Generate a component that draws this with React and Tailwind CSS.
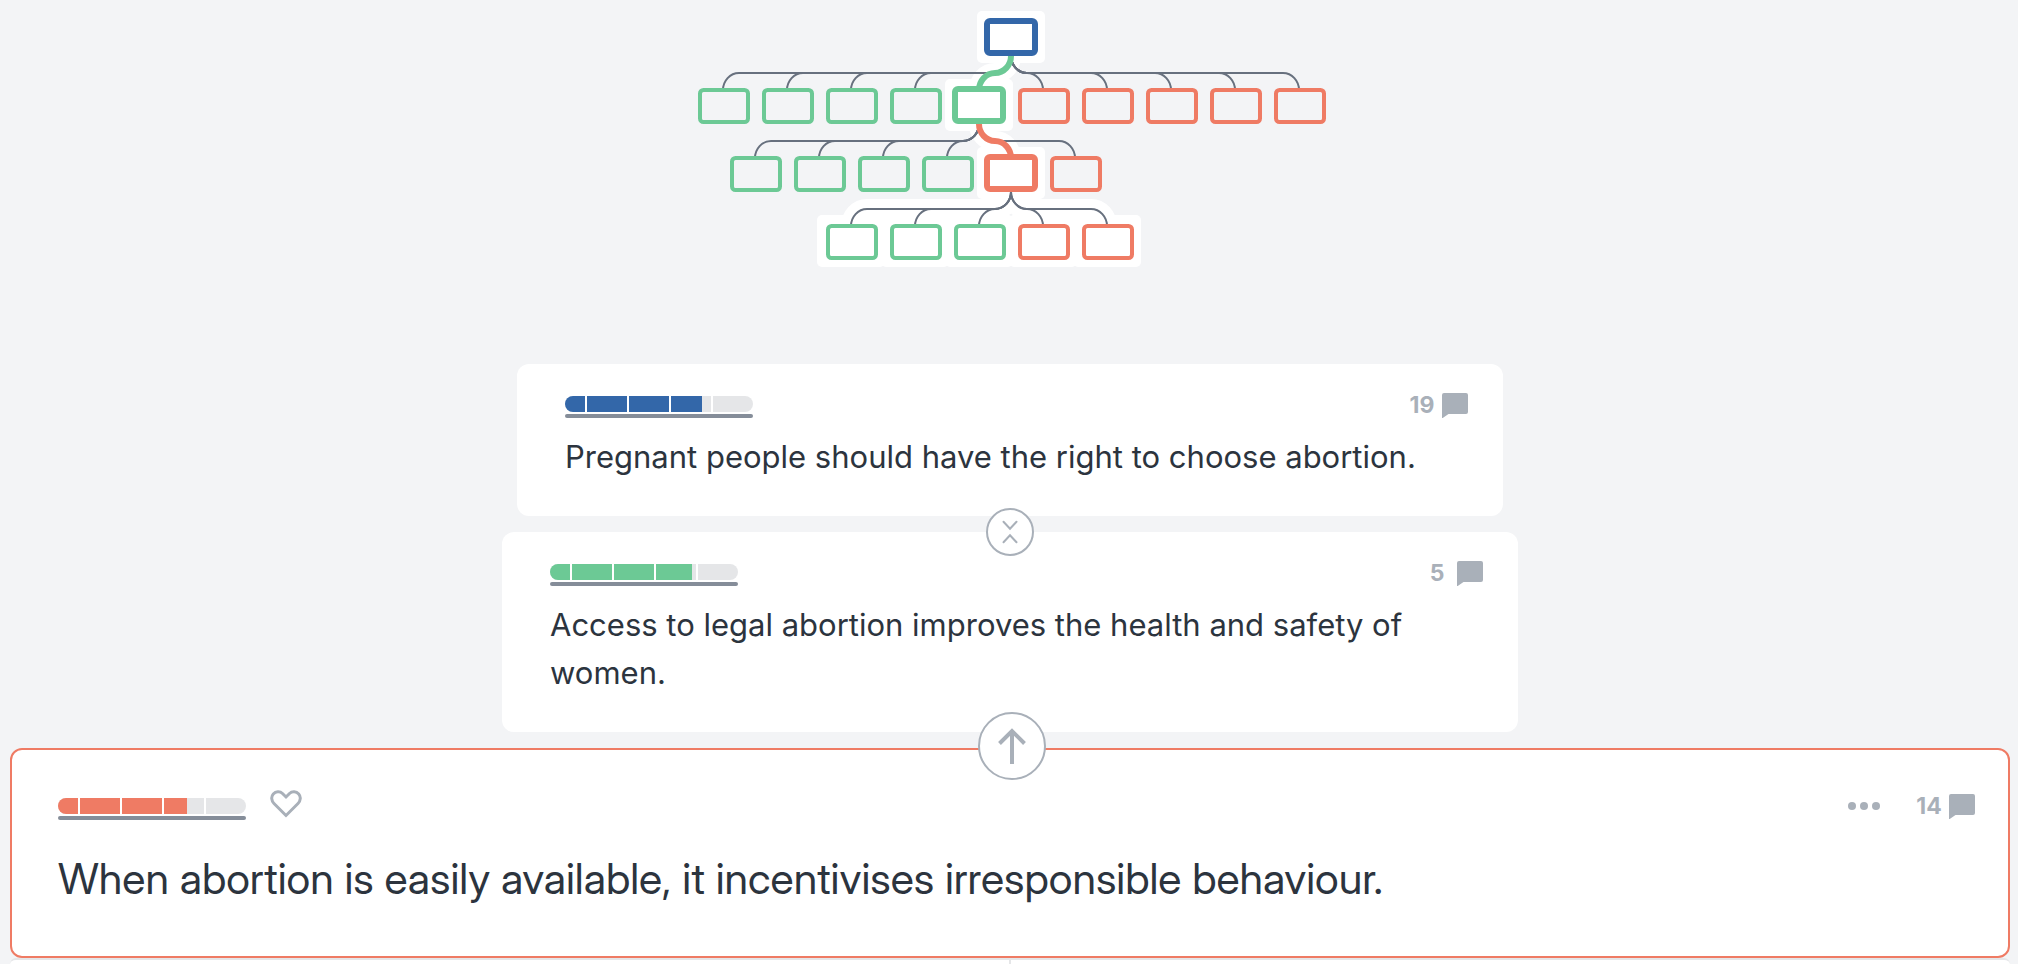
import React from "react";

const GREEN = "#6cc995";
const CORAL = "#ef7b64";
const BLUE = "#3367a9";

/* Rows of the argument map: x positions of the link ends, first child to last. */
const ROWS = [
  { parentX: 1011, top: 56, firstX: 723, pros: 5, count: 10, active: 4 },
  { parentX: 979, top: 124, firstX: 755, pros: 4, count: 6, active: 4 },
  { parentX: 1011, top: 192, firstX: 851, pros: 3, count: 5, active: -1, halo: true },
];

function linkPath(parentX, top, childX) {
  const dir = childX < parentX ? -1 : 1;
  const mid = top + 17;
  return [
    `M${parentX} ${top}`,
    `C${parentX} ${top + 9} ${parentX + dir * 7} ${mid} ${parentX + dir * 16} ${mid}`,
    `H${childX - dir * 16}`,
    `C${childX - dir * 7} ${mid} ${childX} ${mid + 8} ${childX} ${top + 34}`,
  ].join(" ");
}

function Halo({ x, y }) {
  return <rect x={x} y={y} width="68" height="52" rx="5" fill="#fff" />;
}

function MapNode({ x, y, color, active }) {
  return active ? (
    <rect x={x - 24} y={y - 35} width="48" height="32" rx="3" fill="#fff" stroke={color} strokeWidth="6" />
  ) : (
    <rect x={x - 23} y={y + 2} width="48" height="32" rx="3.5" fill="none" stroke={color} strokeWidth="4" />
  );
}

function ArgumentMap() {
  const links = [];
  const nodes = [];
  const halos = [];
  const activeLinks = [];
  ROWS.forEach((row, r) => {
    for (let i = 0; i < row.count; i++) {
      const x = row.firstX + i * 64;
      const color = i < row.pros ? GREEN : CORAL;
      const d = linkPath(row.parentX, row.top, x);
      const active = i === row.active;
      const key = `${r}-${i}`;
      if (active || row.halo) {
        halos.push(<path key={`p${key}`} d={d} fill="none" stroke="#fff" strokeWidth="20" />);
        halos.push(<Halo key={key} x={x - 34} y={row.top + 23} />);
      }
      if (active) {
        activeLinks.push(<path key={key} d={d} fill="none" stroke={color} strokeWidth="6" />);
        nodes.push(<MapNode key={key} x={x} y={row.top + 68} color={color} active />);
      } else {
        links.push(<path key={key} d={d} fill="none" stroke="#67707e" strokeWidth="2" />);
        nodes.push(<MapNode key={key} x={x} y={row.top + 32} color={color} />);
      }
    }
  });
  return (
    <svg className="h-[272px] w-[640px] max-w-full" viewBox="690 0 640 272" role="img" aria-label="Argument map">
      <Halo x={977} y={11} />
      {halos}
      {links}
      {activeLinks}
      <MapNode x={1011} y={56} color={BLUE} active />
      {nodes}
    </svg>
  );
}

function VoteBar({ value, fill }) {
  return (
    <div className="flex w-[188px] flex-col gap-0.5" role="img" aria-label={`Impact ${value} of 188`}>
      <div className="relative flex h-4 overflow-hidden rounded-full bg-[#e5e6e8]">
        <div className={`absolute inset-y-0 left-0 ${fill}`} style={{ width: value }} />
        <div className="relative ml-5 w-0.5 bg-white" />
        <div className="relative ml-10 w-0.5 bg-white" />
        <div className="relative ml-10 w-0.5 bg-white" />
        <div className="relative ml-10 w-0.5 bg-white" />
      </div>
      <div className="h-1 rounded-xs bg-[#858d99]" />
    </div>
  );
}

function CommentCount({ count }) {
  return (
    <button type="button" className="flex items-center gap-1.5 text-[#a9b0b9]" aria-label={`${count} comments`}>
      <span className="min-w-7 text-center text-[23px] leading-[26px] font-bold">{count}</span>
      <svg className="h-[26px] w-[26px]" viewBox="0 0 26 26" fill="currentColor" aria-hidden="true">
        <path d="M2 1H24A2 2 0 0 1 26 3V20A2 2 0 0 1 24 22H6.5L0 26.5V3A2 2 0 0 1 2 1Z" />
      </svg>
    </button>
  );
}

function ClaimCard({ width, value, fill, count, children }) {
  return (
    <article className={`max-w-full rounded-xl bg-white pt-7 pr-[35px] pb-[35px] pl-12 ${width}`}>
      <div className="flex h-[26px] items-center justify-between">
        <div className="self-end">
          <VoteBar value={value} fill={fill} />
        </div>
        <CommentCount count={count} />
      </div>
      <p className="mt-[15px] text-[31px] leading-[48px]">{children}</p>
    </article>
  );
}

export default function App() {
  return (
    <main className="flex min-h-screen flex-col bg-[#f3f4f6] pr-2 pl-2.5 font-['Inter','Liberation_Sans',sans-serif] text-[#2c343e]">
      <div className="flex justify-center">
        <ArgumentMap />
      </div>

      <div className="mt-[92px] flex flex-col items-center gap-4">
        <ClaimCard width="w-[986px]" value={137} fill="bg-[#3367a9]" count={19}>
          Pregnant people should have the right to choose abortion.
        </ClaimCard>
        <div className="relative max-w-full">
          <ClaimCard width="w-[1016px]" value={142} fill="bg-[#6cc995]" count={5}>
            Access to legal abortion improves the health and safety of women.
          </ClaimCard>
          <button
            type="button"
            aria-label="Collapse"
            className="absolute -top-6 left-1/2 -ml-6 flex h-12 w-12 items-center justify-center rounded-full border-2 border-[#a9b0b9] bg-white text-[#a9b0b9]"
          >
            <svg className="h-6 w-4" viewBox="0 0 16 24" fill="none" stroke="currentColor" strokeWidth="2" strokeLinecap="round" aria-hidden="true">
              <path d="M1.5 1.8 8 8.8 14.5 1.8M1.5 22.2 8 15.2 14.5 22.2" />
            </svg>
          </button>
        </div>
      </div>

      <article className="relative mt-4 rounded-xl border-2 border-[#ef7b64] bg-white pt-[42px] pr-[33px] pb-12 pl-[46px]">
        <button
          type="button"
          aria-label="Go to parent claim"
          className="absolute -top-[38px] left-1/2 -ml-8 flex h-[68px] w-[68px] items-center justify-center rounded-full border-2 border-[#a9b0b9] bg-white text-[#a9b0b9]"
        >
          <svg className="h-9 w-7" viewBox="0 0 28 36" fill="none" stroke="currentColor" strokeWidth="4" aria-hidden="true">
            <path d="M14 36V3M1.5 15.5 14 3 26.5 15.5" />
          </svg>
        </button>
        <div className="flex h-7 items-center justify-between">
          <div className="flex items-center gap-6 self-stretch">
            <div className="self-end">
              <VoteBar value={129} fill="bg-[#ef7b64]" />
            </div>
            <button type="button" aria-label="Thank" className="text-[#a9b0b9]">
              <svg className="h-8 w-8" viewBox="0 0 32 32" fill="none" stroke="currentColor" strokeWidth="3" aria-hidden="true">
                <path d="M16 25.5 4 13.5C1.3 10.8.9 6.6 3.3 3.9 5.7 1.2 9.9.9 12.5 3.5L16 7 19.5 3.5C22.1.9 26.3 1.2 28.7 3.9 31.1 6.6 30.7 10.8 28 13.5Z" />
              </svg>
            </button>
          </div>
          <div className="flex items-center gap-[35px]">
            <button type="button" aria-label="More options" className="text-[#a9b0b9]">
              <svg className="h-2 w-8" viewBox="0 0 32 8" fill="currentColor" aria-hidden="true">
                <circle cx="4" cy="4" r="4" />
                <circle cx="16" cy="4" r="4" />
                <circle cx="28" cy="4" r="4" />
              </svg>
            </button>
            <CommentCount count={14} />
          </div>
        </div>
        <h1 className="mt-7 font-['Inter_Display','Inter','Liberation_Sans',sans-serif] text-[43px] leading-[60px]">
          When abortion is easily available, it incentivises irresponsible behaviour.
        </h1>
      </article>

      <section className="grid flex-1 grid-cols-2 rounded-t-xl border-t-2 border-[#e5e6e8] bg-white" aria-label="Pros and cons">
        <div className="border-r border-[#e5e6e8]" />
        <div className="border-l border-[#e5e6e8]" />
      </section>
    </main>
  );
}
